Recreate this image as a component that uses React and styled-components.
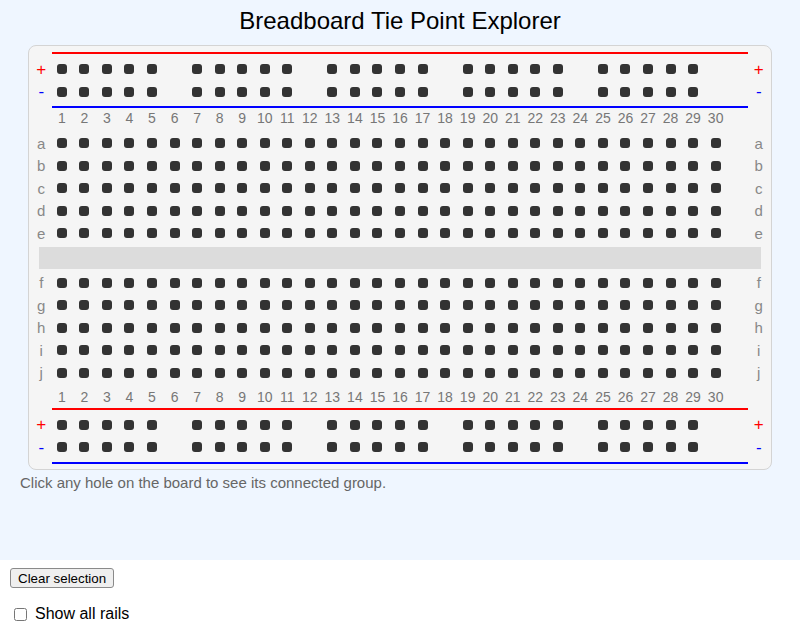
import React, { useState } from 'react'
import styled, { createGlobalStyle, css } from 'styled-components'

const GlobalStyle = createGlobalStyle`
  body {
    margin: 0;
    background: #ffffff;
    font-family: "Liberation Sans", Arial, Helvetica, sans-serif;
  }
`

const COLS = 30
const PITCH = '22.555px'
const TOP_ROWS = ['a', 'b', 'c', 'd', 'e']
const BOTTOM_ROWS = ['f', 'g', 'h', 'i', 'j']

// rail holes come in groups of five, skipping every sixth column
const railHasHole = (col) => col <= 30 && col % 6 !== 0

const Panel = styled.div`
  background: #eff6ff;
  height: 560px;
  padding: 7px 20px 0;
  box-sizing: border-box;
`

const Title = styled.h1`
  margin: 0 0 10px;
  font-size: 24px;
  line-height: 28px;
  font-weight: normal;
  text-align: center;
  color: #000;
`

const Board = styled.div`
  width: 744px;
  margin: 0 auto;
  box-sizing: border-box;
  border: 1px solid #d4d4d4;
  border-radius: 8px;
  background: #f5f5f5;
  padding: 6px 0 5px;
  display: flex;
  flex-direction: column;
`

const Row = styled.div`
  display: grid;
  grid-template-columns: 1fr repeat(31, ${PITCH}) 1fr;
  height: ${(p) => p.$h || '22.5px'};
  align-items: center;
`

const RailLine = styled.div`
  grid-column: 2 / 33;
  height: 2px;
  margin: 0 1px;
  background: ${(p) => (p.$tone === 'plus' ? '#ff0000' : '#0000ff')};
`

const RailBlock = styled.div`
  margin: ${(p) => p.$m};
`

const SideLabel = styled.span`
  text-align: center;
  font-size: ${(p) => (p.$rail ? '17px' : '15px')};
  line-height: 1;
  color: ${(p) =>
    p.$rail === 'plus' ? '#ff0000' : p.$rail === 'minus' ? '#0000ff' : '#888888'};
  padding: ${(p) => (p.$side === 'left' ? '0 0 0 3px' : '0 3px 0 0')};
`

const Cell = styled.div`
  display: flex;
  align-items: center;
  justify-content: center;
  height: 100%;
`

const Hole = styled.button`
  width: 10px;
  height: 10px;
  padding: 0;
  border: none;
  border-radius: 3px;
  background: #333333;
  cursor: pointer;
  ${(p) =>
    p.$on &&
    css`
      background: #f59e0b;
      box-shadow: 0 0 0 2px rgba(245, 158, 11, 0.35);
    `}
`

const Num = styled.span`
  text-align: center;
  font-size: 14px;
  line-height: 20px;
  color: #777777;
  white-space: nowrap;
`

const Channel = styled.div`
  height: 22.3px;
  margin: 2.2px 10px 2.45px;
  background: #dcdcdc;
`

const Caption = styled.p`
  margin: 4px 0 0;
  font-size: 15px;
  line-height: 18px;
  color: #666666;
`

const Controls = styled.div`
  padding: 8px 10px;
  display: flex;
  flex-direction: column;
  align-items: flex-start;
  gap: 17px;
`

const ClearButton = styled.button`
  font-family: "Liberation Sans", Arial, sans-serif;
  font-size: 13.333px;
  height: 20px;
  padding: 0 7px;
  color: #000;
  background: #efefef;
  border: 1px solid #8a8a8a;
  border-radius: 3px;
  cursor: pointer;
`

const CheckLabel = styled.label`
  display: flex;
  align-items: center;
  font-size: 16px;
  line-height: 18px;
  color: #000;

  input {
    width: 13px;
    height: 13px;
    margin: 0 8px 0 4px;
  }
`

const groupOf = (kind, row, col) => {
  if (kind === 'rail') return `rail-${row}`
  const half = TOP_ROWS.includes(row) ? 'top' : 'bottom'
  return `strip-${half}-${col}`
}

const cols = Array.from({ length: 31 }, (_, i) => i + 1)

const NumberRow = ({ style }) => (
  <Row $h="20px" style={style}>
    <span />
    {cols.map((c) => (
      <Num key={c}>{c <= COLS ? c : ''}</Num>
    ))}
    <span />
  </Row>
)

const RailRow = ({ id, sign, tone, selected, showRails, onPick }) => (
  <Row>
    <SideLabel $side="left" $rail={tone}>{sign}</SideLabel>
    {cols.map((c) => (
      <Cell key={c}>
        {railHasHole(c) && (
          <Hole
            $on={selected === `rail-${id}` || showRails}
            onClick={() => onPick(groupOf('rail', id, c))}
            aria-label={`${sign} rail ${c}`}
          />
        )}
      </Cell>
    ))}
    <SideLabel $side="right" $rail={tone}>{sign}</SideLabel>
  </Row>
)

const Rails = ({ pos, margin, ...rest }) => (
  <>
    <Row $h="2px">
      <RailLine $tone="plus" />
    </Row>
    <RailBlock $m={margin}>
      <RailRow id={`${pos}-plus`} sign="+" tone="plus" {...rest} />
      <RailRow id={`${pos}-minus`} sign="-" tone="minus" {...rest} />
    </RailBlock>
    <Row $h="2px">
      <RailLine $tone="minus" />
    </Row>
  </>
)

const TerminalRow = ({ row, selected, onPick }) => (
  <Row>
    <SideLabel $side="left">{row}</SideLabel>
    {cols.map((c) => (
      <Cell key={c}>
        {c <= COLS && (
          <Hole
            $on={selected === groupOf('strip', row, c)}
            onClick={() => onPick(groupOf('strip', row, c))}
            aria-label={`${row}${c}`}
          />
        )}
      </Cell>
    ))}
    <SideLabel $side="right">{row}</SideLabel>
  </Row>
)

export default function App() {
  const [selected, setSelected] = useState(null)
  const [showRails, setShowRails] = useState(false)

  const pick = (g) => setSelected((cur) => (cur === g ? null : g))

  return (
    <>
      <GlobalStyle />
      <Panel>
        <Title>Breadboard Tie Point Explorer</Title>
        <Board>
          <Rails
            pos="top"
            margin="3.75px 0 3.25px"
            selected={selected}
            showRails={showRails}
            onPick={pick}
          />
          <NumberRow style={{ marginBottom: 4 }} />
          {TOP_ROWS.map((r) => (
            <TerminalRow key={r} row={r} selected={selected} onPick={pick} />
          ))}
          <Channel />
          {BOTTOM_ROWS.map((r) => (
            <TerminalRow key={r} row={r} selected={selected} onPick={pick} />
          ))}
          <NumberRow style={{ marginTop: 3, marginBottom: 1.5 }} />
          <Rails
            pos="bottom"
            margin="3.25px 0 3.25px"
            selected={selected}
            showRails={showRails}
            onPick={pick}
          />
        </Board>
        <Caption>Click any hole on the board to see its connected group.</Caption>
      </Panel>
      <Controls>
        <ClearButton onClick={() => setSelected(null)}>Clear selection</ClearButton>
        <CheckLabel>
          <input
            type="checkbox"
            checked={showRails}
            onChange={(e) => setShowRails(e.target.checked)}
          />
          Show all rails
        </CheckLabel>
      </Controls>
    </>
  )
}
